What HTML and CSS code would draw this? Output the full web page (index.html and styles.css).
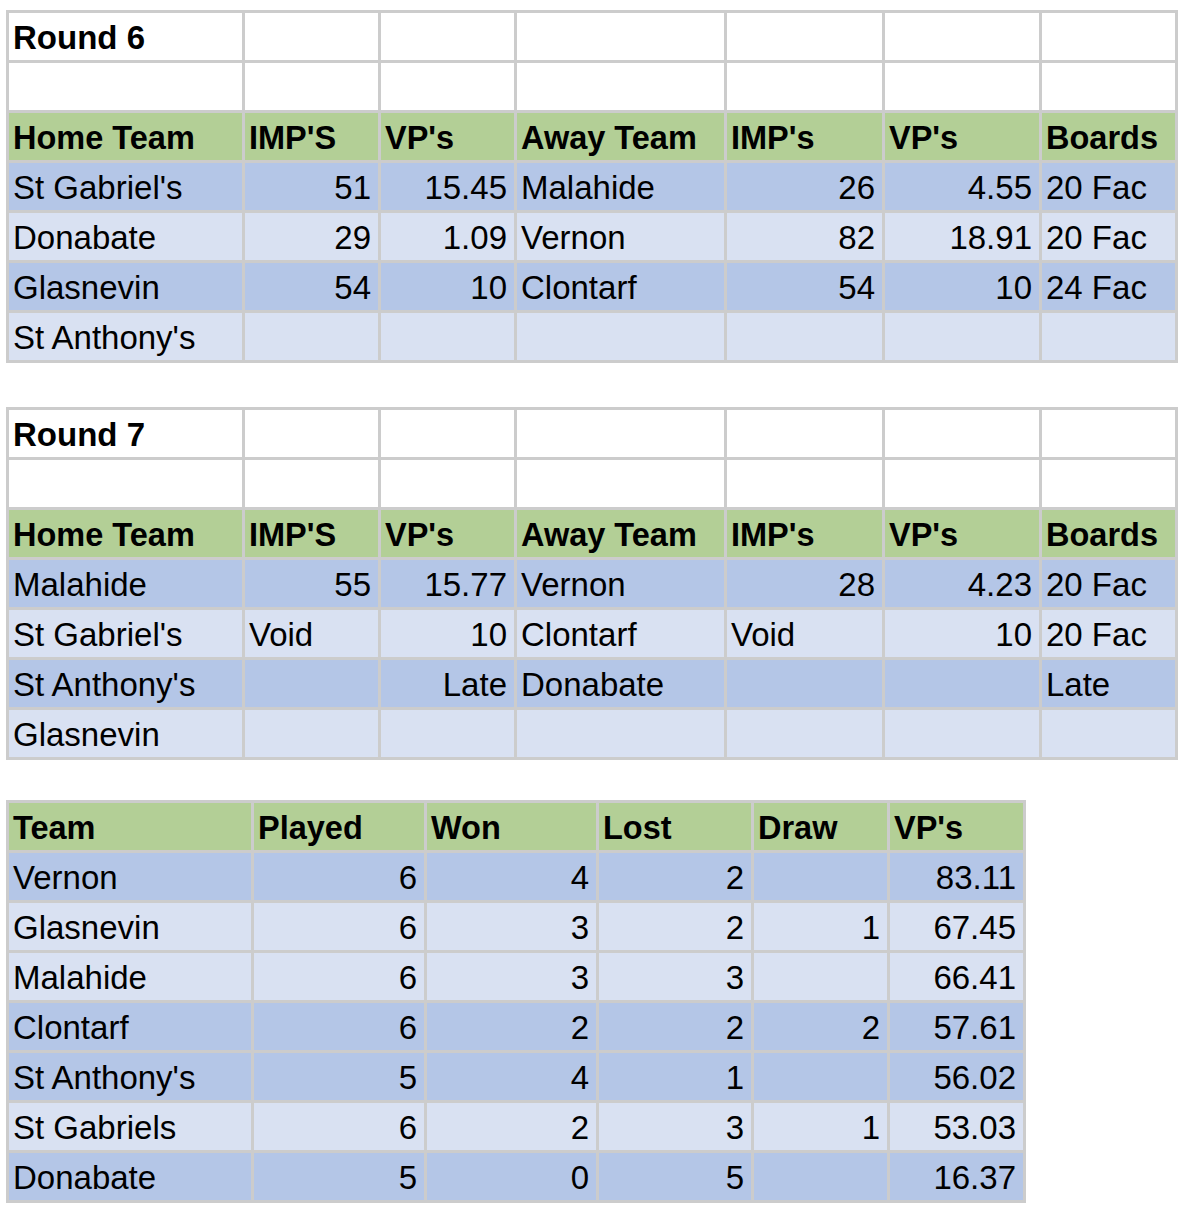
FILE: index.html
```html
<!DOCTYPE html>
<html lang="en">
<head>
<meta charset="utf-8">
<title>League Results</title>
<link rel="stylesheet" href="styles.css">
</head>
<body>
<main class="page">
  <section class="sheet round">
    <div class="c title">Round 6</div><div class="c"></div><div class="c"></div><div class="c"></div><div class="c"></div><div class="c"></div><div class="c"></div>
    <div class="c"></div><div class="c"></div><div class="c"></div><div class="c"></div><div class="c"></div><div class="c"></div><div class="c"></div>
    <div class="c h">Home Team</div><div class="c h">IMP'S</div><div class="c h">VP's</div><div class="c h">Away Team</div><div class="c h">IMP's</div><div class="c h">VP's</div><div class="c h">Boards</div>
    <div class="c d">St Gabriel's</div><div class="c d n">51</div><div class="c d n">15.45</div><div class="c d">Malahide</div><div class="c d n">26</div><div class="c d n">4.55</div><div class="c d">20 Fac</div>
    <div class="c l">Donabate</div><div class="c l n">29</div><div class="c l n">1.09</div><div class="c l">Vernon</div><div class="c l n">82</div><div class="c l n">18.91</div><div class="c l">20 Fac</div>
    <div class="c d">Glasnevin</div><div class="c d n">54</div><div class="c d n">10</div><div class="c d">Clontarf</div><div class="c d n">54</div><div class="c d n">10</div><div class="c d">24 Fac</div>
    <div class="c l">St Anthony's</div><div class="c l"></div><div class="c l"></div><div class="c l"></div><div class="c l"></div><div class="c l"></div><div class="c l"></div>
  </section>

  <section class="sheet round second">
    <div class="c title">Round 7</div><div class="c"></div><div class="c"></div><div class="c"></div><div class="c"></div><div class="c"></div><div class="c"></div>
    <div class="c"></div><div class="c"></div><div class="c"></div><div class="c"></div><div class="c"></div><div class="c"></div><div class="c"></div>
    <div class="c h">Home Team</div><div class="c h">IMP'S</div><div class="c h">VP's</div><div class="c h">Away Team</div><div class="c h">IMP's</div><div class="c h">VP's</div><div class="c h">Boards</div>
    <div class="c d">Malahide</div><div class="c d n">55</div><div class="c d n">15.77</div><div class="c d">Vernon</div><div class="c d n">28</div><div class="c d n">4.23</div><div class="c d">20 Fac</div>
    <div class="c l">St Gabriel's</div><div class="c l">Void</div><div class="c l n">10</div><div class="c l">Clontarf</div><div class="c l">Void</div><div class="c l n">10</div><div class="c l">20 Fac</div>
    <div class="c d">St Anthony's</div><div class="c d"></div><div class="c d n">Late</div><div class="c d">Donabate</div><div class="c d"></div><div class="c d"></div><div class="c d">Late</div>
    <div class="c l">Glasnevin</div><div class="c l"></div><div class="c l"></div><div class="c l"></div><div class="c l"></div><div class="c l"></div><div class="c l"></div>
  </section>

  <section class="sheet standings">
    <div class="c h">Team</div><div class="c h">Played</div><div class="c h">Won</div><div class="c h">Lost</div><div class="c h">Draw</div><div class="c h">VP's</div>
    <div class="c d">Vernon</div><div class="c d n">6</div><div class="c d n">4</div><div class="c d n">2</div><div class="c d n"></div><div class="c d n">83.11</div>
    <div class="c l">Glasnevin</div><div class="c l n">6</div><div class="c l n">3</div><div class="c l n">2</div><div class="c l n">1</div><div class="c l n">67.45</div>
    <div class="c l">Malahide</div><div class="c l n">6</div><div class="c l n">3</div><div class="c l n">3</div><div class="c l n"></div><div class="c l n">66.41</div>
    <div class="c d">Clontarf</div><div class="c d n">6</div><div class="c d n">2</div><div class="c d n">2</div><div class="c d n">2</div><div class="c d n">57.61</div>
    <div class="c d">St Anthony's</div><div class="c d n">5</div><div class="c d n">4</div><div class="c d n">1</div><div class="c d n"></div><div class="c d n">56.02</div>
    <div class="c l">St Gabriels</div><div class="c l n">6</div><div class="c l n">2</div><div class="c l n">3</div><div class="c l n">1</div><div class="c l n">53.03</div>
    <div class="c d">Donabate</div><div class="c d n">5</div><div class="c d n">0</div><div class="c d n">5</div><div class="c d n"></div><div class="c d n">16.37</div>
  </section>
</main>
</body>
</html>
```

FILE: styles.css
```css
html, body {
  margin: 0;
  padding: 0;
  background: #ffffff;
}

.page {
  padding: 10px 0 0 6px;
  font-family: "Liberation Sans", Arial, sans-serif;
  font-size: 33px;
  color: #000000;
}

.sheet {
  display: grid;
  gap: 3px;
  padding: 3px;
  background: #cccccc;
  grid-auto-rows: 47px;
}

.round {
  width: 1166px;
  grid-template-columns: 233px 133px 133px 207px 155px 154px 133px;
}

.round.second {
  margin-top: 44px;
}

.standings {
  margin-top: 40px;
  width: 1014px;
  grid-template-columns: 242px 170px 169px 152px 133px 133px;
}

.c {
  background: #ffffff;
  display: flex;
  align-items: flex-end;
  line-height: 38px;
  padding: 0 7px 3px 4px;
  white-space: nowrap;
  overflow: hidden;
}

.title {
  font-weight: bold;
}

.h {
  background: #b3cf96;
  font-weight: bold;
  font-size: 32.5px;
}

.d {
  background: #b4c6e7;
}

.l {
  background: #d9e1f2;
}

.n {
  justify-content: flex-end;
}
```
